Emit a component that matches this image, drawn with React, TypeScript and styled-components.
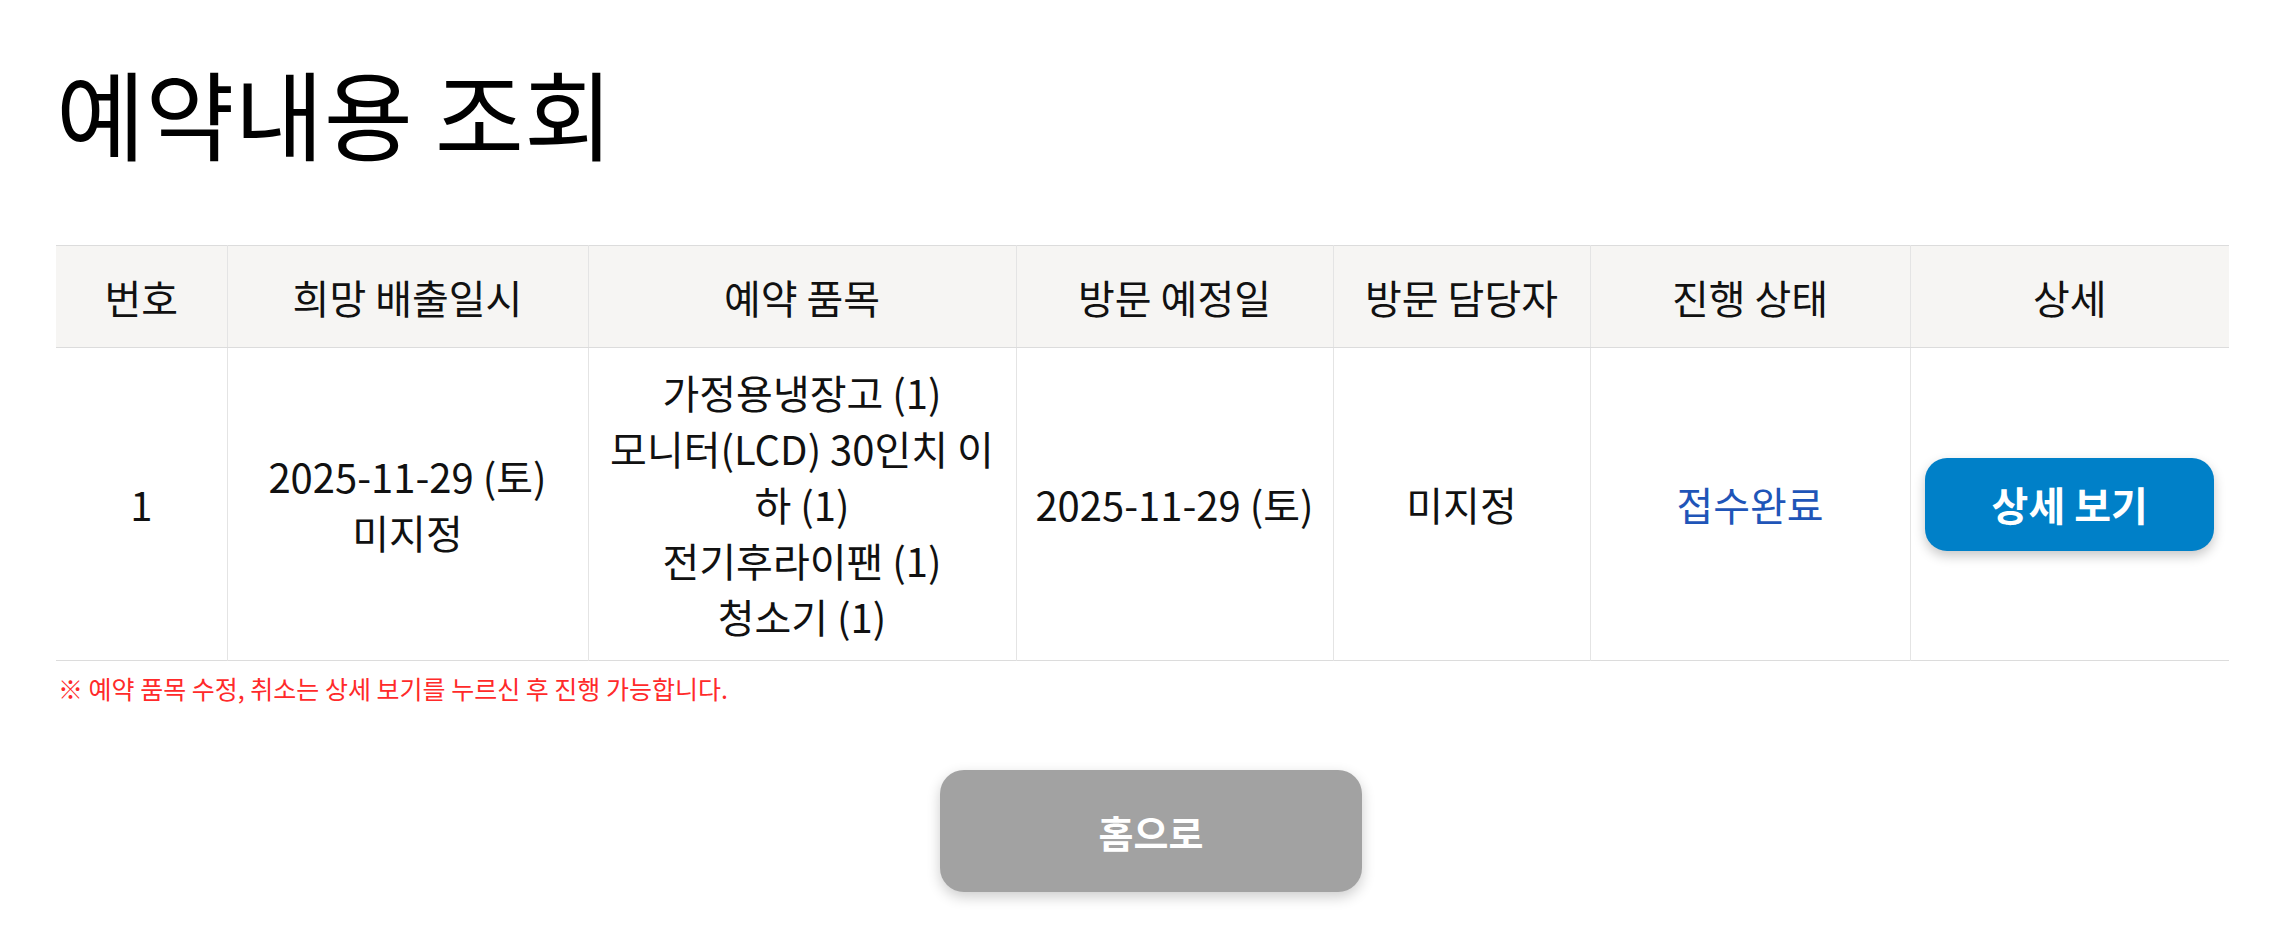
import React from "react";
import styled, { createGlobalStyle } from "styled-components";

const GlobalStyle = createGlobalStyle`
  html, body {
    margin: 0;
    padding: 0;
    background: #ffffff;
  }
  body {
    font-family: "Noto Sans CJK KR", "Noto Sans", sans-serif;
    color: #111111;
  }
`;

const Page = styled.div`
  display: flex;
  flex-direction: column;
  padding: 53px 66px 40px 56px;
`;

const Title = styled.h1`
  margin: 0;
  font-family: "Noto Sans CJK KR", sans-serif;
  font-weight: 400;
  font-size: 97px;
  line-height: 1.2;
  color: #000000;
`;

const Table = styled.table`
  margin-top: 76px;
  width: 2173px;
  border-collapse: collapse;
  table-layout: fixed;
  border-top: 1px solid #dcdcdc;
  border-bottom: 1px solid #dcdcdc;
`;

const HeadCell = styled.th`
  height: 101px;
  padding: 0 8px;
  background: #f6f5f3;
  font-weight: 400;
  font-size: 40px;
  line-height: 1.3;
  color: #111111;
  text-align: center;
  vertical-align: middle;
  border-bottom: 1px solid #dcdcdc;
  border-left: 1px solid #e4e4e4;
  &:first-child {
    border-left: none;
  }
`;

const BodyCell = styled.td`
  padding: 16px 12px;
  font-size: 40px;
  line-height: 56px;
  color: #111111;
  text-align: center;
  vertical-align: middle;
  border-left: 1px solid #e4e4e4;
  &:first-child {
    border-left: none;
  }
`;

const Line = styled.div`
  display: block;
`;

const Status = styled.span`
  color: #1f55b8;
`;

const DetailButton = styled.button`
  width: 289px;
  height: 93px;
  padding: 0;
  border: none;
  border-radius: 22px;
  background: #0080c8;
  color: #ffffff;
  font-family: "Noto Sans CJK KR", sans-serif;
  font-weight: 700;
  font-size: 40px;
  box-shadow: 0 5px 12px rgba(0, 0, 0, 0.22);
  cursor: pointer;
  vertical-align: middle;
`;

const Notice = styled.p`
  margin: 11px 0 0 2px;
  font-size: 25px;
  line-height: 32px;
  font-weight: 400;
  color: #ff2a2a;
`;

const Actions = styled.div`
  display: flex;
  justify-content: center;
  margin-top: 66px;
  padding-left: 17px;
`;

const HomeButton = styled.button`
  width: 422px;
  height: 122px;
  padding: 0;
  border: none;
  border-radius: 24px;
  background: #a2a2a2;
  color: #ffffff;
  font-family: "Noto Sans CJK KR", sans-serif;
  font-weight: 700;
  font-size: 38px;
  box-shadow: 0 5px 14px rgba(0, 0, 0, 0.2);
  cursor: pointer;
`;

const columns = [171, 361, 428, 317, 257, 320, 319];
const headers = ["번호", "희망 배출일시", "예약 품목", "방문 예정일", "방문 담당자", "진행 상태", "상세"];
const items = ["가정용냉장고 (1)", "모니터(LCD) 30인치 이하 (1)", "전기후라이팬 (1)", "청소기 (1)"];

export default function App() {
  return (
    <>
      <GlobalStyle />
      <Page>
        <Title>예약내용 조회</Title>
        <Table>
          <colgroup>
            {columns.map((w, i) => (
              <col key={i} style={{ width: `${w}px` }} />
            ))}
          </colgroup>
          <thead>
            <tr>
              {headers.map((h) => (
                <HeadCell key={h}>{h}</HeadCell>
              ))}
            </tr>
          </thead>
          <tbody>
            <tr>
              <BodyCell>1</BodyCell>
              <BodyCell>
                <Line>2025-11-29 (토)</Line>
                <Line>미지정</Line>
              </BodyCell>
              <BodyCell>
                {items.map((it) => (
                  <Line key={it}>{it}</Line>
                ))}
              </BodyCell>
              <BodyCell>2025-11-29 (토)</BodyCell>
              <BodyCell>미지정</BodyCell>
              <BodyCell>
                <Status>접수완료</Status>
              </BodyCell>
              <BodyCell>
                <DetailButton>상세 보기</DetailButton>
              </BodyCell>
            </tr>
          </tbody>
        </Table>
        <Notice>※ 예약 품목 수정, 취소는 상세 보기를 누르신 후 진행 가능합니다.</Notice>
        <Actions>
          <HomeButton>홈으로</HomeButton>
        </Actions>
      </Page>
    </>
  );
}
